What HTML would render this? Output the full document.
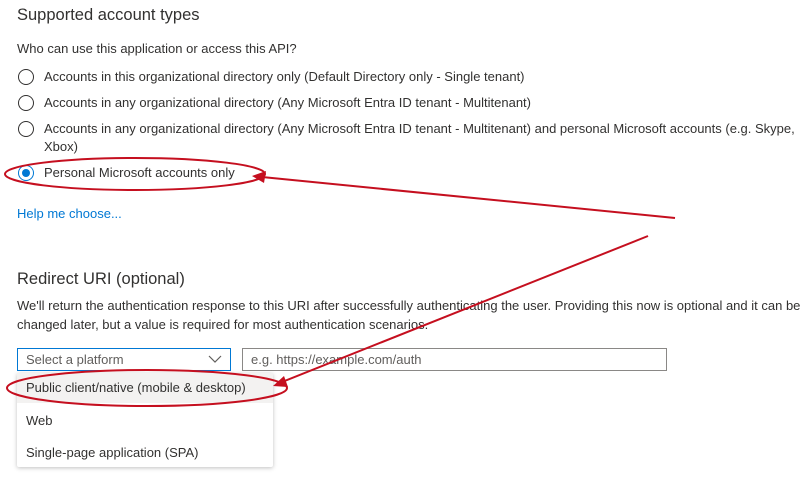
<!DOCTYPE html><html><head><style>
body{margin:0;width:803px;height:486px;background:#fff;font-family:"Liberation Sans",sans-serif;color:#323130;position:relative;overflow:hidden}
.t{position:absolute;white-space:nowrap;font-size:13px}
.h{font-size:16.5px;color:#323130}
.r{position:absolute;width:16px;height:16px;border:1px solid #323130;border-radius:50%;box-sizing:border-box}
</style></head><body>
<div class="t h" style="left:17px;top:6px">Supported account types</div>
<div class="t" style="left:17px;top:41px">Who can use this application or access this API?</div>
<div class="r" style="left:18px;top:69px"></div><div class="t" style="left:44px;top:69px">Accounts in this organizational directory only (Default Directory only - Single tenant)</div>
<div class="r" style="left:18px;top:95px"></div><div class="t" style="left:44px;top:95px">Accounts in any organizational directory (Any Microsoft Entra ID tenant - Multitenant)</div>
<div class="r" style="left:18px;top:121px"></div><div class="t" style="left:44px;top:121px">Accounts in any organizational directory (Any Microsoft Entra ID tenant - Multitenant) and personal Microsoft accounts (e.g. Skype,</div>
<div class="t" style="left:44px;top:139px">Xbox)</div>
<div class="r" style="left:18px;top:165px;border-color:#0078d4"><div style="position:absolute;left:3px;top:3px;width:8px;height:8px;border-radius:50%;background:#0078d4"></div></div>
<div class="t" style="left:44px;top:165px">Personal Microsoft accounts only</div>
<div class="t" style="left:17px;top:206px;color:#0078d4">Help me choose...</div>
<div class="t h" style="left:17px;top:270px">Redirect URI (optional)</div>
<div class="t" style="left:17px;top:298px">We'll return the authentication response to this URI after successfully authenticating the user. Providing this now is optional and it can be</div>
<div class="t" style="left:17px;top:317px">changed later, but a value is required for most authentication scenarios.</div>
<div style="position:absolute;left:17px;top:348px;width:214px;height:23px;border:1px solid #0078d4;box-sizing:border-box"></div>
<div class="t" style="left:26px;top:352px;color:#605e5c">Select a platform</div>
<svg style="position:absolute;left:208px;top:354px" width="14" height="10"><path d="M1 2 L7 8 L13 2" fill="none" stroke="#605e5c" stroke-width="1.2"/></svg>
<div style="position:absolute;left:242px;top:348px;width:425px;height:23px;border:1px solid #8a8886;box-sizing:border-box"></div>
<div class="t" style="left:251px;top:352px;color:#605e5c">e.g. https://example.com/auth</div>
<div style="position:absolute;left:17px;top:373px;width:256px;height:94px;background:#fff;box-shadow:0 1px 4px rgba(0,0,0,.25);border-radius:2px"></div>
<div style="position:absolute;left:17px;top:373px;width:256px;height:30px;background:#f3f2f1"></div>
<div class="t" style="left:26px;top:380px">Public client/native (mobile &amp; desktop)</div>
<div class="t" style="left:26px;top:413px">Web</div>
<div class="t" style="left:26px;top:445px">Single-page application (SPA)</div>
<svg style="position:absolute;left:0;top:0" width="803" height="486">
<g fill="none" stroke="#c50f1f" stroke-width="2">
<ellipse cx="135" cy="174" rx="130" ry="16"/>
<ellipse cx="147" cy="388" rx="140" ry="18"/>
<line x1="675" y1="218" x2="262" y2="177"/>
<line x1="648" y1="236" x2="282" y2="382"/>
</g>
<g fill="#c50f1f">
<polygon points="252,176 266,171 264,183"/>
<polygon points="273,386 284,376 288,387"/>
</g>
</svg>
</body></html>
